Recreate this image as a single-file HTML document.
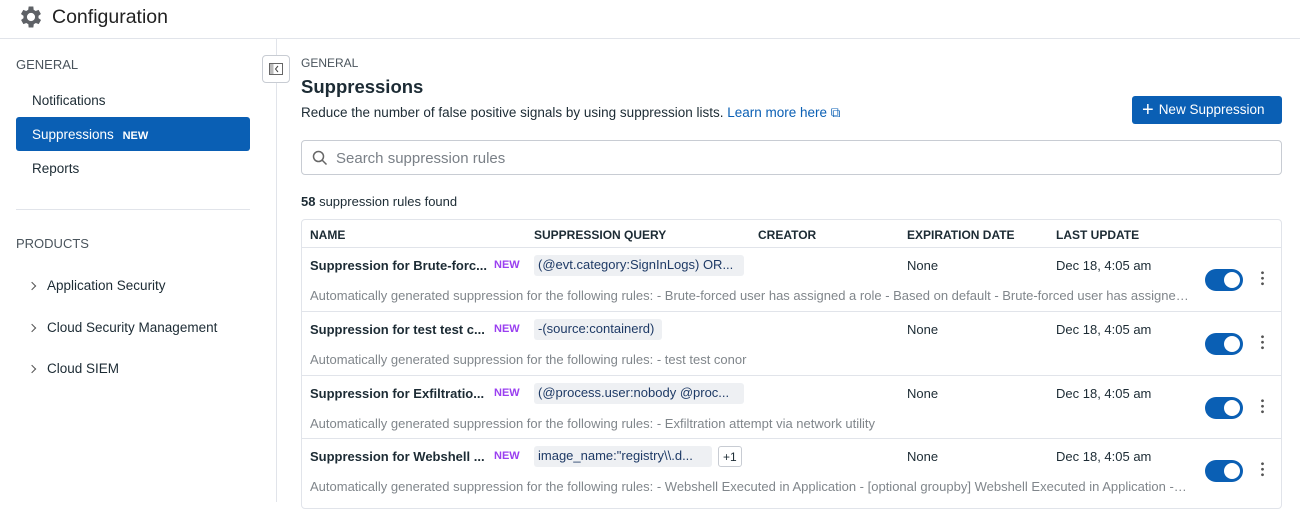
<!DOCTYPE html>
<html><head><style>
*{box-sizing:border-box;margin:0;padding:0}
body{width:1300px;height:502px;overflow:hidden;background:#fff;font-family:"Liberation Sans",sans-serif;color:#1c2b34;position:relative}
.abs{position:absolute}
.hdr{left:0;top:0;width:1300px;height:39px;border-bottom:1px solid #e1e4ea}
.side{left:0;top:39px;width:277px;height:463px;border-right:1px solid #e1e4ea}
.sec{font-size:13px;color:#4a545c}
.item{font-size:13.5px;color:#1c2b34}
.tag{font-size:11px;font-weight:bold}
.tbl{left:301px;top:219px;width:981px;height:290px;border:1px solid #e1e4ea;border-radius:4px}
.th{font-size:12px;font-weight:bold;top:8px}
.row{left:0;width:979px;height:64px;border-top:1px solid #e1e4ea}
.nm{left:8px;top:10px;font-size:13px;font-weight:bold}
.nw{top:11px;font-size:11px;font-weight:bold;color:#9a3ff0}
.q{left:232px;top:7px;height:21px;width:210px;background:#eef0f3;border-radius:3px;font-size:13px;padding:2px 4px;color:#1e3a66;white-space:nowrap}
.d{left:8px;top:40px;font-size:13px;color:#80868b;white-space:nowrap;width:880px;overflow:hidden;text-overflow:ellipsis}
.c{top:10px;font-size:13px}
.tg{left:903px;top:21px;width:38px;height:22px;border-radius:11px;background:#0a5fb4}
.tg:after{content:"";position:absolute;right:3px;top:3px;width:16px;height:16px;border-radius:50%;background:#fff}
.dots{left:959px;top:22px;width:3px;height:16px;background:radial-gradient(circle,#555 1.2px,transparent 1.6px) 0 0/3px 5.5px repeat-y}
.chev{display:inline-block;width:6px;height:6px;border-right:1.3px solid #555;border-top:1.3px solid #555;transform:rotate(45deg);margin-right:12px;vertical-align:1px}
</style></head><body>
<div class="abs hdr">
<svg class="abs" style="left:17px;top:3px" width="28" height="28" viewBox="0 0 24 24"><path fill="#5e6166" fill-rule="evenodd" d="M19.4 13a7.7 7.7 0 0 0 0-2l2.1-1.6-2-3.5-2.5 1a7.4 7.4 0 0 0-1.7-1L15 3h-4l-.4 2.9a7.4 7.4 0 0 0-1.7 1l-2.5-1-2 3.5L6.6 11a7.7 7.7 0 0 0 0 2l-2.1 1.6 2 3.5 2.5-1a7.4 7.4 0 0 0 1.7 1L11 21h4l.4-2.9a7.4 7.4 0 0 0 1.7-1l2.5 1 2-3.5zM13 15.5a3.5 3.5 0 1 1 0-7 3.5 3.5 0 0 1 0 7z" transform="translate(-1 0)"/></svg>
<div class="abs" style="left:52px;top:6px;font-size:19.5px;color:#222">Configuration</div>
</div>
<div class="abs side">
<div class="abs sec" style="left:16px;top:18px">GENERAL</div>
<div class="abs item" style="left:32px;top:54px">Notifications</div>
<div class="abs" style="left:16px;top:78px;width:234px;height:34px;background:#0a5fb4;border-radius:3px"></div>
<div class="abs item" style="left:32px;top:88px;color:#fff">Suppressions <span class="tag" style="margin-left:5px">NEW</span></div>
<div class="abs item" style="left:32px;top:122px">Reports</div>
<div class="abs" style="left:16px;top:170px;width:234px;height:1px;background:#e1e4ea"></div>
<div class="abs sec" style="left:16px;top:197px">PRODUCTS</div>
<div class="abs item" style="left:29px;top:239px"><span class="chev"></span>Application Security</div>
<div class="abs item" style="left:29px;top:281px"><span class="chev"></span>Cloud Security Management</div>
<div class="abs item" style="left:29px;top:322px"><span class="chev"></span>Cloud SIEM</div>
</div>
<div class="abs" style="left:262px;top:55px;width:28px;height:28px;border:1px solid #c8ccd3;border-radius:4px;background:#fff">
<svg class="abs" style="left:6px;top:7px" width="14" height="12" viewBox="0 0 14 12"><rect x=".5" y=".5" width="13" height="11" fill="none" stroke="#666"/><rect x="1" y="1" width="3.5" height="10" fill="#bbb"/><path d="M9 3L6.5 6 9 9" fill="none" stroke="#444"/></svg></div>
<div class="abs sec" style="left:301px;top:56px;font-size:12px">GENERAL</div>
<div class="abs" style="left:301px;top:76px;font-size:18.5px;font-weight:bold;color:#1c2b34">Suppressions</div>
<div class="abs" style="left:301px;top:105px;font-size:13.5px">Reduce the number of false positive signals by using suppression lists. <span style="color:#0a5fb4">Learn more here ⧉</span></div>
<div class="abs" style="left:1132px;top:96px;width:150px;height:28px;background:#0a5fb4;border-radius:3px;color:#fff;font-size:13.5px;padding:6px 0 0 10px"><span style="font-size:20px;line-height:14px;vertical-align:-2px;margin-right:5px">+</span>New Suppression</div>
<div class="abs" style="left:301px;top:140px;width:981px;height:35px;border:1px solid #c8ccd3;border-radius:4px">
<svg class="abs" style="left:10px;top:9px" width="16" height="16" viewBox="0 0 16 16"><circle cx="6.5" cy="6.5" r="5" fill="none" stroke="#666" stroke-width="1.5"/><path d="M10 10l4.5 4.5" stroke="#666" stroke-width="1.5"/></svg>
<div class="abs" style="left:34px;top:9px;font-size:15px;color:#7a8087">Search suppression rules</div></div>
<div class="abs" style="left:301px;top:194px;font-size:13px"><b>58</b> suppression rules found</div>
<div class="abs tbl">
<div class="abs th" style="left:8px">NAME</div><div class="abs th" style="left:232px">SUPPRESSION QUERY</div><div class="abs th" style="left:456px">CREATOR</div><div class="abs th" style="left:605px">EXPIRATION DATE</div><div class="abs th" style="left:754px">LAST UPDATE</div>
<div class="abs row" style="top:27px"><div class="abs nm">Suppression for Brute-forc...</div><div class="abs nw" style="left:192px">NEW</div><div class="abs q">(@evt.category:SignInLogs) OR...</div><div class="abs c" style="left:605px">None</div><div class="abs c" style="left:754px">Dec 18, 4:05 am</div><div class="abs d">Automatically generated suppression for the following rules: - Brute-forced user has assigned a role - Based on default - Brute-forced user has assigned a role again</div><div class="abs tg"></div><div class="abs dots"></div></div>
<div class="abs row" style="top:91px"><div class="abs nm">Suppression for test test c...</div><div class="abs nw" style="left:192px">NEW</div><div class="abs q" style="width:128px">-(source:containerd)</div><div class="abs c" style="left:605px">None</div><div class="abs c" style="left:754px">Dec 18, 4:05 am</div><div class="abs d">Automatically generated suppression for the following rules: - test test conor</div><div class="abs tg"></div><div class="abs dots"></div></div>
<div class="abs row" style="top:155px"><div class="abs nm">Suppression for Exfiltratio...</div><div class="abs nw" style="left:192px">NEW</div><div class="abs q">(@process.user:nobody @proc...</div><div class="abs c" style="left:605px">None</div><div class="abs c" style="left:754px">Dec 18, 4:05 am</div><div class="abs d">Automatically generated suppression for the following rules: - Exfiltration attempt via network utility</div><div class="abs tg"></div><div class="abs dots"></div></div>
<div class="abs row" style="top:218px"><div class="abs nm">Suppression for Webshell ...</div><div class="abs nw" style="left:192px">NEW</div><div class="abs q" style="width:178px">image_name:"registry\\.d...</div><div class="abs" style="left:416px;top:7px;height:21px;border:1px solid #c8ccd3;border-radius:3px;font-size:12px;padding:3px 4px">+1</div><div class="abs c" style="left:605px">None</div><div class="abs c" style="left:754px">Dec 18, 4:05 am</div><div class="abs d">Automatically generated suppression for the following rules: - Webshell Executed in Application - [optional groupby] Webshell Executed in Application - more</div><div class="abs tg"></div><div class="abs dots"></div></div>
</div>
</body></html>
